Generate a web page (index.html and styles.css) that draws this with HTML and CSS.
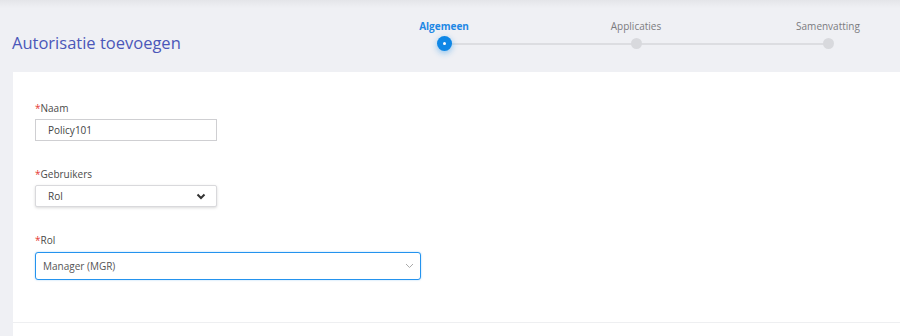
FILE: index.html
```html
<!DOCTYPE html>
<html lang="nl">
<head>
    <meta charset="UTF-8">
    <meta name="viewport" content="width=device-width, initial-scale=1.0">
    <title>Autorisatie toevoegen</title>
    <link rel="stylesheet" href="styles.css">
</head>
<body>
    <div class="page">
        <div class="header">
            <h1 class="title">Autorisatie toevoegen</h1>

            <div class="stepper">
                <div class="step active">
                    <span class="step-label">Algemeen</span>
                    <span class="step-dot"></span>
                </div>
                <div class="step">
                    <span class="step-label">Applicaties</span>
                    <span class="step-dot"></span>
                </div>
                <div class="step last">
                    <span class="step-label">Samenvatting</span>
                    <span class="step-dot"></span>
                </div>
            </div>
        </div>

        <div class="card">
            <div class="form">
                <div class="field">
                    <label class="label"><span class="req">*</span>Naam</label>
                    <div class="input small">Policy101</div>
                </div>

                <div class="field">
                    <label class="label"><span class="req">*</span>Gebruikers</label>
                    <div class="input small select raised">
                        <span>Rol</span>
                        <svg class="chevron bold" width="10" height="7" viewBox="0 0 10 7">
                            <path d="M1.5 1.5 L5 5 L8.5 1.5" fill="none" stroke="#333" stroke-width="2"/>
                        </svg>
                    </div>
                </div>

                <div class="field">
                    <label class="label"><span class="req">*</span>Rol</label>
                    <div class="input wide select focused">
                        <span>Manager (MGR)</span>
                        <svg class="chevron" width="9" height="6" viewBox="0 0 9 6">
                            <path d="M1 1 L4.5 4.5 L8 1" fill="none" stroke="#aaa" stroke-width="1"/>
                        </svg>
                    </div>
                </div>
            </div>
            <div class="footer"></div>
        </div>
    </div>
</body>
</html>
```

FILE: styles.css
```css
* {
    margin: 0;
    padding: 0;
    box-sizing: border-box;
}

body {
    font-family: 'Open Sans', 'Noto Sans', sans-serif;
    background: #eff0f4;
    color: #555;
    height: 336px;
    overflow: hidden;
}

.page {
    background: linear-gradient(180deg, #e4e5e9 0px, #eff0f4 8px);
    height: 100%;
}

.header {
    display: flex;
    height: 72px;
}

.title {
    flex: 0 0 348px;
    padding: 30px 0 0 12px;
    font-size: 16.5px;
    font-weight: 400;
    color: #4b57b9;
    line-height: 26px;
}

.stepper {
    display: flex;
    padding-top: 19px;
}

.step {
    width: 192px;
    display: flex;
    flex-direction: column;
    align-items: center;
    position: relative;
}

.step::after {
    content: '';
    position: absolute;
    left: 50%;
    width: 100%;
    top: 24px;
    height: 2px;
    background: #dcdde1;
}

.step.last::after {
    display: none;
}

.step-label {
    font-size: 10px;
    line-height: 14px;
    color: #7b7b7f;
}

.step-dot {
    margin-top: 5px;
    width: 11px;
    height: 11px;
    border-radius: 50%;
    background: #d8d9dd;
    position: relative;
    z-index: 1;
}

.step.active .step-label {
    color: #1e88e5;
    font-weight: 700;
}

.step.active .step-dot {
    margin-top: 3px;
    width: 15px;
    height: 15px;
    background: #0f87e6;
    box-shadow: 0 2px 6px rgba(15, 135, 230, 0.45);
    display: flex;
    align-items: center;
    justify-content: center;
}

.step.active .step-dot::before {
    content: '';
    width: 3px;
    height: 3px;
    border-radius: 50%;
    background: #fff;
}

.card {
    margin-left: 13px;
    background: #fff;
    height: 264px;
}

.form {
    padding: 29px 22px 0;
    height: 251px;
    border-bottom: 1px solid #eeeff1;
}

.field {
    margin-bottom: 26px;
}

.label {
    display: block;
    font-size: 10px;
    line-height: 14px;
    color: #4a4a4a;
    margin-bottom: 4px;
}

.field:last-child .label {
    margin-bottom: 5px;
}

.req {
    color: #e53935;
}

.input {
    display: flex;
    align-items: center;
    font-size: 10px;
    color: #444;
    border: 1px solid #cfcfd2;
    background: #fff;
}

.input.small {
    width: 182px;
    height: 22px;
    padding: 0 12px;
}

.select {
    justify-content: space-between;
}

.raised {
    border-color: #d9d9dc;
    border-radius: 2px;
    box-shadow: 0 1px 3px rgba(0, 0, 0, 0.15);
    padding-right: 10px !important;
}

.input.wide {
    width: 386px;
    height: 28px;
    padding: 0 6px 0 7px;
    color: #555;
}

.focused {
    border: 1.5px solid #2493ee;
    border-radius: 3px;
    box-shadow: 0 0 2px rgba(36, 147, 238, 0.4);
}

.chevron {
    display: block;
}
```
